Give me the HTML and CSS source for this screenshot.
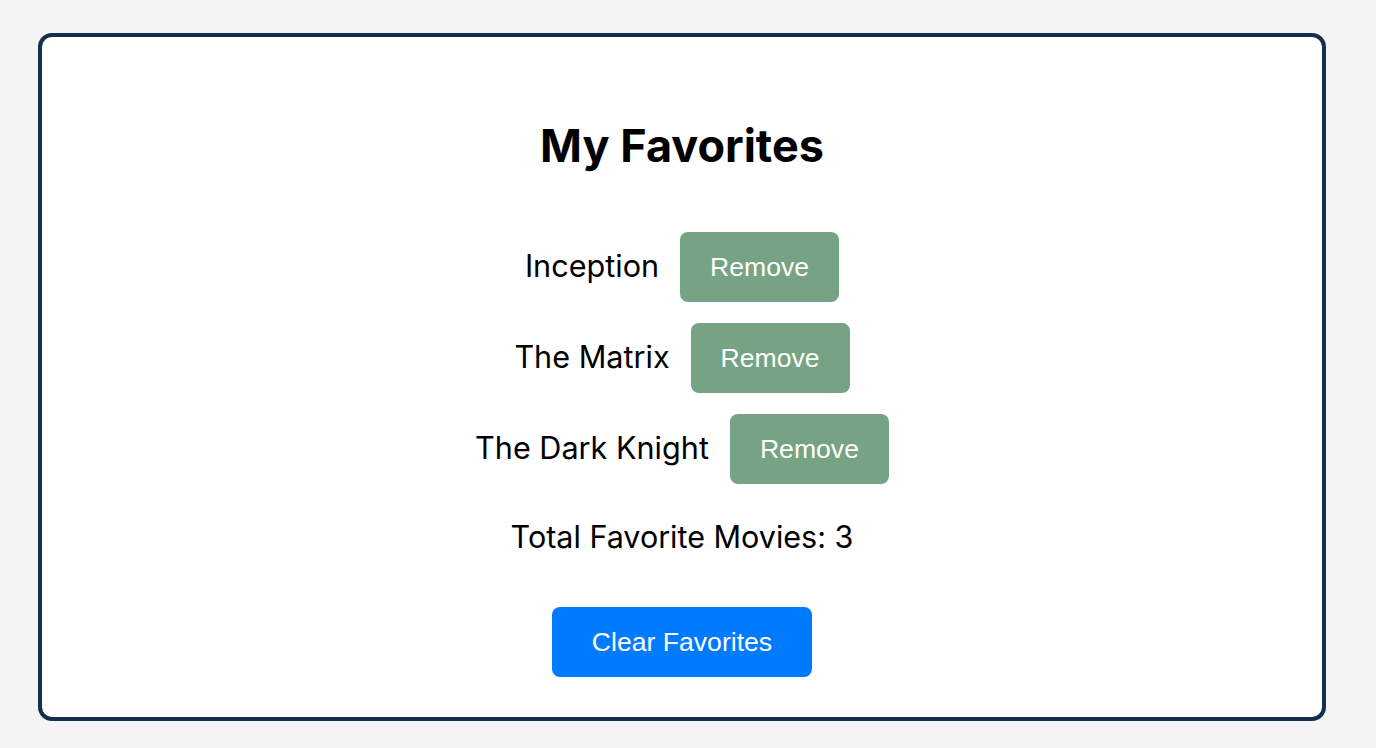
FILE: index.html
```html
<!DOCTYPE html>
<html lang="en">
<head>
<meta charset="utf-8">
<title>My Favorites</title>
<link rel="stylesheet" href="styles.css">
</head>
<body>
  <div class="card">
    <h1 class="title">My Favorites</h1>
    <ul class="list">
      <li class="item"><span class="name">Inception</span><button class="remove">Remove</button></li>
      <li class="item"><span class="name">The Matrix</span><button class="remove">Remove</button></li>
      <li class="item"><span class="name">The Dark Knight</span><button class="remove">Remove</button></li>
    </ul>
    <p class="total">Total Favorite Movies: 3</p>
    <button class="clear">Clear Favorites</button>
  </div>
</body>
</html>
```

FILE: styles.css
```css
html, body {
  margin: 0;
  padding: 0;
}
body {
  background: #f4f4f4;
  padding: 33px 0 0 38px;
  font-family: Inter, "Noto Sans", sans-serif;
  color: #000;
}
.card {
  box-sizing: border-box;
  width: 1288px;
  height: 688px;
  background: #fff;
  border: 4px solid #14304f;
  border-radius: 14px;
  display: flex;
  flex-direction: column;
  align-items: center;
  padding-top: 82px;
}
.title {
  margin: 0;
  font-size: 45px;
  line-height: 54px;
  font-weight: 700;
}
.list {
  list-style: none;
  margin: 59px 0 0;
  padding: 0;
  display: flex;
  flex-direction: column;
  align-items: center;
  gap: 21px;
}
.item {
  display: flex;
  align-items: center;
  gap: 21px;
}
.name {
  font-size: 30.6px;
  line-height: 36px;
  margin-top: -3px;
}
.remove, .clear {
  border: none;
  color: #fff;
  font-family: "Liberation Sans", Arial, sans-serif;
  font-size: 26.6px;
  line-height: 30px;
  border-radius: 8px;
  height: 70px;
}
.remove {
  background: #76a383;
  padding: 0 30px;
}
.total {
  margin: 35px 0 0;
  font-size: 30.5px;
  line-height: 36px;
}
.clear {
  background: #007bff;
  padding: 0 40px;
  margin-top: 52px;
}
```
